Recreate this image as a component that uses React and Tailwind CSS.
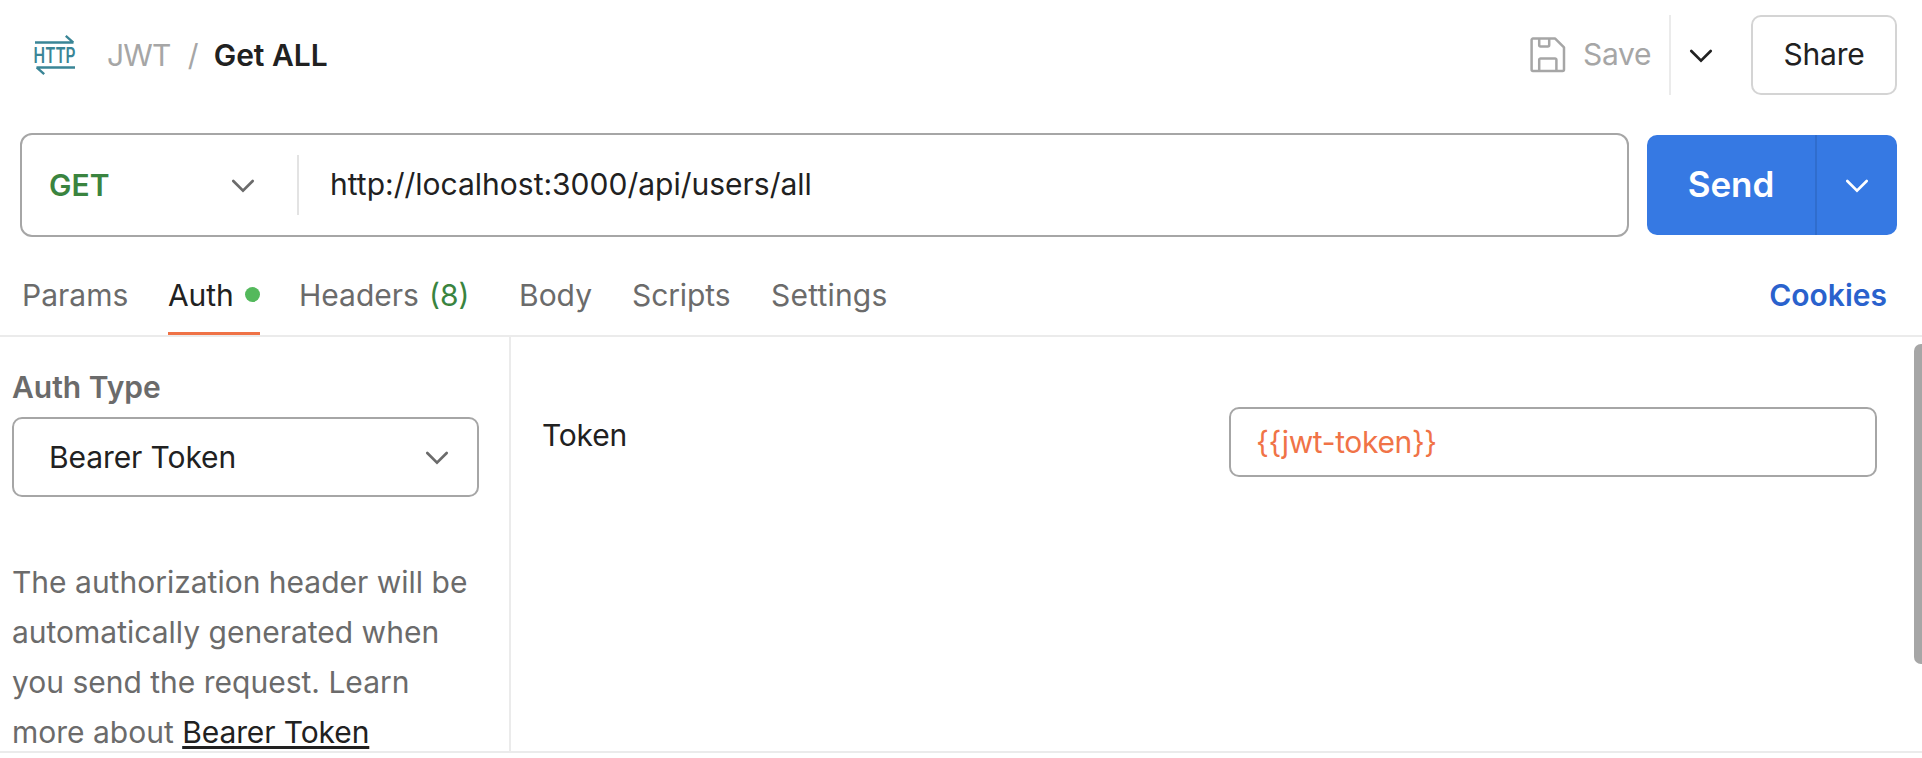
function Chevron({ className = "" }) {
  return (
    <svg className={`mt-px h-[14px] w-6 shrink-0 ${className}`} viewBox="0 0 24 14" fill="none" stroke="currentColor" strokeWidth="2.7" strokeLinecap="round">
      <path d="M2.3 2 12 11.6 21.7 2" />
    </svg>
  );
}

function HttpIcon() {
  return (
    <svg className="h-10 w-10 shrink-0 overflow-visible text-[#3a8596]" viewBox="0 0 40 40" fill="none">
      <path d="M0 7.5h38.5M30.8.9l7.6 6.7" stroke="currentColor" strokeWidth="2.4" />
      <path d="M40 32.5H1.5M9.2 39.1l-7.6-6.7" stroke="currentColor" strokeWidth="2.4" />
      <text x="-1.4" y="27.8" textLength="42" lengthAdjust="spacingAndGlyphs" fill="currentColor" className="font-['Inter',sans-serif] text-[21.5px] font-semibold">
        HTTP
      </text>
    </svg>
  );
}

function SaveIcon() {
  return (
    <svg className="h-9 w-9 shrink-0" viewBox="0 0 36 36" fill="none" stroke="currentColor" strokeWidth="2.5" strokeLinejoin="round">
      <path d="M3 1.6h22.2l8.8 8.8v22.1a1.4 1.4 0 0 1-1.4 1.4H3a1.4 1.4 0 0 1-1.4-1.4V3A1.4 1.4 0 0 1 3 1.6Z" />
      <path d="M9.2 1.6v6.4a1.4 1.4 0 0 0 1.4 1.4h7.2a1.4 1.4 0 0 0 1.4-1.4V1.6" />
      <path d="M9.2 33.9V22.8a1.4 1.4 0 0 1 1.4-1.4h14.4a1.4 1.4 0 0 1 1.4 1.4v11.1" />
    </svg>
  );
}

function Header() {
  return (
    <header className="flex h-[110px] shrink-0 items-center pr-[25px] pl-[35px]">
      <HttpIcon />
      <span className="ml-8 tracking-[-0.8px] text-[#a6a6a6]">JWT</span>
      <span className="ml-[17px] w-[11px] text-[#a6a6a6]">/</span>
      <h1 className="ml-[15px] font-semibold">Get ALL</h1>
      <div className="ml-auto flex h-20 items-center">
        <button className="flex items-center text-[#a6a6a6]">
          <SaveIcon />
          <span className="-mt-0.5 ml-[17px] w-[86px] text-left tracking-[-0.3px]">Save</span>
        </button>
        <button className="flex h-20 w-[64px] items-center justify-center border-l-2 border-[#ebebeb] pr-0.5">
          <Chevron />
        </button>
        <button className="ml-[18px] h-20 w-[146px] rounded-[10px] border-2 border-[#d4d4d4] pb-0.5 tracking-[-0.2px]">
          Share
        </button>
      </div>
    </header>
  );
}

function RequestBar() {
  return (
    <div className="mt-[23px] flex shrink-0 items-center pr-[25px] pl-5">
      <div className="flex h-[104px] flex-1 items-center rounded-xl border-2 border-[#a6a6a6]">
        <button className="flex h-15 w-[277px] items-center justify-between border-r-2 border-[#e3e3e3] pr-[42px] pl-[27px]">
          <span className="font-semibold text-[#3a843f]">GET</span>
          <Chevron className="text-[#6b6b6b]" />
        </button>
        <span className="-mt-0.5 ml-[31px]">http://localhost:3000/api/users/all</span>
      </div>
      <div className="ml-[18px] flex h-[100px] w-[250px] overflow-hidden rounded-[10px] bg-[#3679e3] text-white">
        <button className="w-[168px] pb-0.5 text-center text-[35px] font-semibold">Send</button>
        <button className="flex flex-1 items-center justify-center border-l-2 border-[#306dcd]">
          <Chevron />
        </button>
      </div>
    </div>
  );
}

function Tabs() {
  return (
    <nav className="flex h-[100px] shrink-0 items-stretch border-b-2 border-[#ebebeb] pr-[35px] pl-[22px] leading-[117px] text-[#6b6b6b]">
      <span className="w-[146px]">Params</span>
      <span className="flex w-[92px] items-stretch justify-between border-b-[3px] border-[#ef7246] text-[#212121]">
        <span className="tracking-[-0.1px]">Auth</span>
        <span className="mt-[50px] size-[15px] rounded-full bg-[#54b95c]" />
      </span>
      <span className="ml-[39px] w-[130px]">Headers</span>
      <span className="w-[90px] text-[#3a843f]">(8)</span>
      <span className="w-[113px]">Body</span>
      <span className="w-[139px] tracking-[-0.1px]">Scripts</span>
      <span className="tracking-[0.2px]">Settings</span>
      <span className="ml-auto font-semibold text-[#2a62cd]">Cookies</span>
    </nav>
  );
}

function AuthPanel() {
  return (
    <section className="flex h-[416px] shrink-0 overflow-hidden border-b-2 border-[#ebebeb]">
      <aside className="w-[511px] shrink-0 border-r-2 border-[#ebebeb] pt-[30px] pl-3">
        <h2 className="font-semibold text-[#6b6b6b]">Auth Type</h2>
        <button className="mt-[10px] flex h-20 w-[467px] items-center justify-between rounded-[10px] border-2 border-[#a6a6a6] pr-[28px] pl-[35px]">
          <span className="tracking-[-0.1px]">Bearer Token</span>
          <Chevron className="text-[#6b6b6b]" />
        </button>
        <p className="mt-[60px] w-[475px] leading-[50px] text-[#6b6b6b]">
          The authorization header will be automatically generated when you send the request. Learn more about{" "}
          <a className="tracking-[-0.1px] text-[#212121] underline decoration-[3px] underline-offset-[3px]">Bearer Token</a>
        </p>
      </aside>
      <div className="flex flex-1 items-start justify-between pt-[70px] pl-[31px]">
        <label className="mt-2 tracking-[-0.2px]">Token</label>
        <div className="mr-[37px] flex h-[70px] w-[648px] items-center rounded-[10px] border-2 border-[#a6a6a6] pl-[25px] tracking-[-0.35px] text-[#f07347]">
          {"{{jwt-token}}"}
        </div>
      </div>
      <div className="mt-[7px] h-80 w-2 rounded-l-[7px] bg-[#a6a6a6]" />
    </section>
  );
}

export default function App() {
  return (
    <main className="flex h-[758px] w-[1922px] flex-col overflow-hidden bg-white font-['Inter',sans-serif] text-[30px] leading-10 text-[#212121]">
      <Header />
      <RequestBar />
      <Tabs />
      <AuthPanel />
    </main>
  );
}
